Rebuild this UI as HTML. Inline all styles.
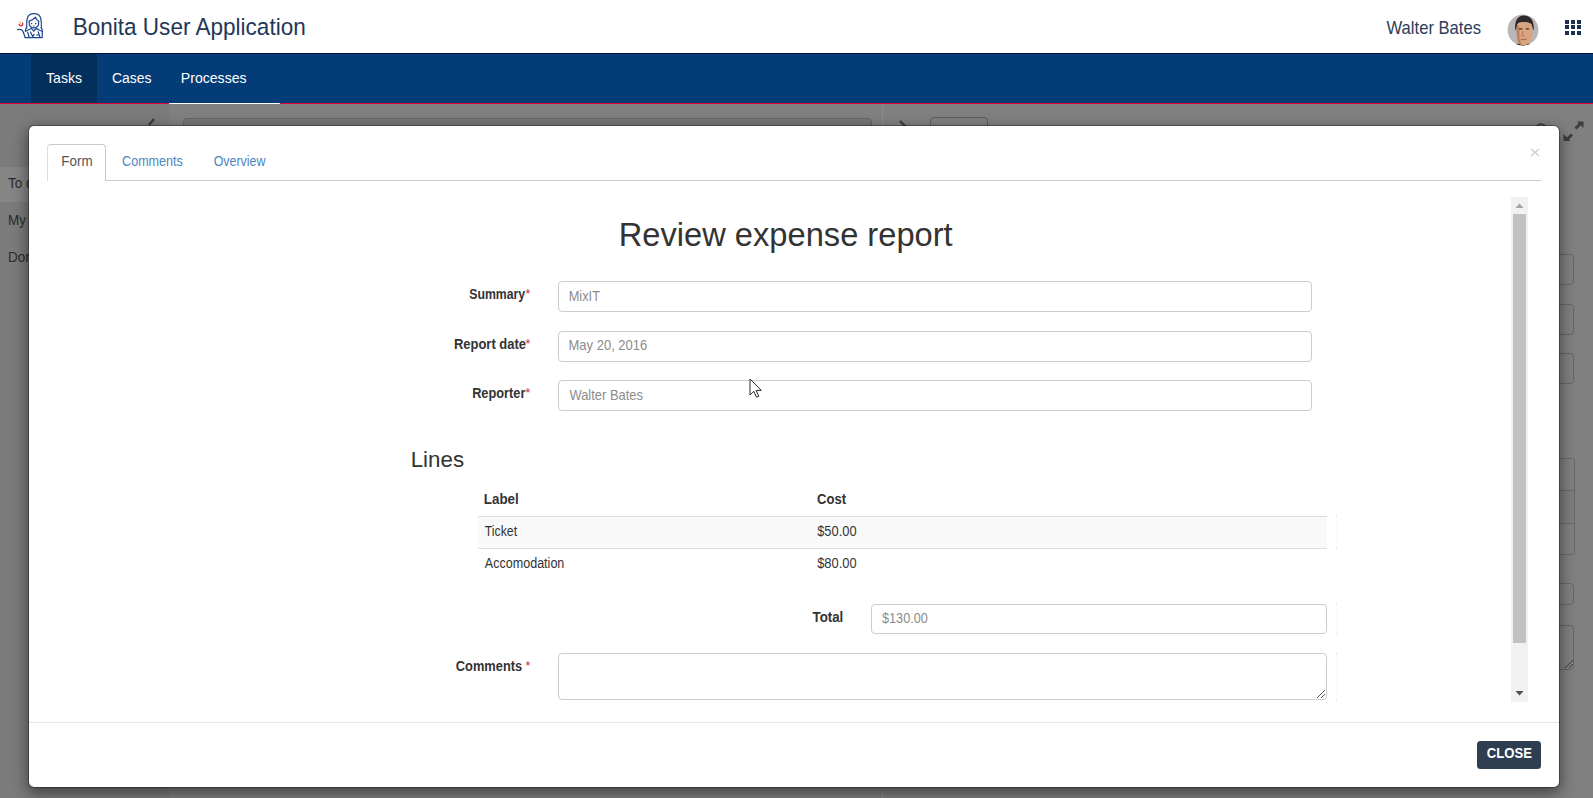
<!DOCTYPE html>
<html><head><meta charset="utf-8">
<style>
*{box-sizing:border-box}
html,body{margin:0;padding:0;width:1593px;height:798px;overflow:hidden;background:#fff;font-family:"Liberation Sans",sans-serif}
.a{position:absolute}
.t{position:absolute;white-space:pre;line-height:1;transform-origin:0 0}
.inp{position:absolute;border:1px solid #cccccc;border-radius:4px;background:#fff}
.bk{position:absolute;border:1px solid #676767;border-radius:4px}
.star{position:absolute;white-space:pre;line-height:1;color:#cf2a2a;font-weight:normal;transform-origin:0 0}
</style></head><body>
<!-- header -->
<svg class="a" style="left:14px;top:10px" width="32" height="32" viewBox="0 0 32 32">
  <g fill="none" stroke="#1b4690" stroke-width="1.2" stroke-linecap="round" stroke-linejoin="round">
    <path d="M12.8 18 C12.5 14 12.6 11 13.2 8.5 C14 5.3 16.5 3.6 20 3.6 C23.5 3.6 26 5.3 26.8 8.5 C27.4 11 27.5 14 27.3 18"/>
    <path d="M15.2 11.2 C16.8 10.8 19.8 9.5 21.4 7.2 C22 9.2 23 10.6 24.6 11.2"/>
    <path d="M15.2 11.2 L15.2 14.2 C15.6 16.6 17.6 17.8 19.8 17.8 C22.2 17.8 24.2 16.6 24.6 14.2 L24.6 11.2"/>
    <path d="M17.2 18.2 L19.8 21 L22.4 18.2"/>
    <path d="M12.6 17.6 C11.6 18.8 11.2 20 11.4 21.2 M27.3 17.6 C28.2 18.8 28.4 20 28.2 21.4"/>
    <path d="M11.4 21.2 C12.8 20.8 14.5 20.2 17.2 18.6 M28.2 21.4 C26.8 20.6 25 20 22.4 18.6"/>
    <path d="M3.6 19.6 C5.5 19 7.2 19.4 8.6 20.6 C9.4 22 10.2 24.5 11 27.2"/>
    <path d="M11 27.6 L28.2 27.6 L28.2 21.4"/>
    <path d="M13.6 22.2 L15.2 27.2 M16.4 22 L18.8 26.6 L20 24.4 M22.5 25 L25.2 25 M24.2 21.8 L25.8 26.8"/>
  </g>
  <circle cx="17.6" cy="13.6" r="0.8" fill="#1b4690"/><circle cx="21.8" cy="13.6" r="0.8" fill="#1b4690"/>
  <path d="M19 16 L20.6 16" stroke="#1b4690" stroke-width="0.9"/>
  <path d="M5.2 14.4 C5.6 16.4 8.4 16.6 8.8 14.2 M8.6 13.2 L8.6 13.4" fill="none" stroke="#e2142d" stroke-width="1.3" stroke-linecap="round"/>
  <path d="M6.4 11.2 C5.8 12.2 6 13.2 6.6 14" fill="none" stroke="#e8a060" stroke-width="0.9"/>
</svg>
<!-- avatar -->
<svg class="a" style="left:1505px;top:12px" width="36" height="36" viewBox="0 0 36 36">
  <defs><clipPath id="cp"><circle cx="18" cy="18" r="15.4"/></clipPath></defs>
  <circle cx="18" cy="18" r="15.4" fill="#bcb5b5"/>
  <g clip-path="url(#cp)">
    <path d="M10.2 17 C9.6 8 13 3.4 18.8 3.4 C24.5 3.4 28.6 7 28.8 15.5 L28.4 19 L26.6 12.5 C24 9.5 14.5 9 12.2 12.5 L11 19 Z" fill="#2e2b2b"/>
    <path d="M12.2 12.5 C14.5 9 24 9.5 26.6 12.5 C27.6 17 27.6 23.5 25.8 28 C24.3 31.2 21.4 33.2 18.6 33.2 C15.3 33.2 12.8 30.6 12.2 26.5 C11.5 21.5 11.5 16.5 12.2 12.5Z" fill="#d9a47e"/>
    <path d="M12.2 12.5 C11.5 16.5 11.5 21.5 12.2 26.5 C12.8 30.6 15.3 33.2 17 33.2 C15 30 14 25 14.5 20 C14.8 16 13.8 13.5 12.2 12.5Z" fill="#b9835f"/>
    <ellipse cx="15.6" cy="16.8" rx="2" ry="0.9" fill="#6f4632"/>
    <ellipse cx="22.4" cy="16.8" rx="2" ry="0.9" fill="#6f4632"/>
    <path d="M17.6 19 L17 24 L19.4 24.2" fill="none" stroke="#b07a58" stroke-width="1"/>
    <path d="M15.8 27.2 C17.5 27.8 19.8 27.8 21.6 27" fill="none" stroke="#9c6248" stroke-width="1"/>
    <path d="M8 36 C9 32 12 31 15 32 C16.5 33.5 20.5 33.5 22 32 C25 31 28 32 29 36 Z" fill="#3a3535"/>
    <path d="M15 31.5 C16.5 34 20.5 34 22 31.5 L22 33 C20 35 17 35 15 33Z" fill="#c8946e"/>
  </g>
</svg>
<!-- grid icon -->
<svg class="a" style="left:1565px;top:20px" width="16" height="16" viewBox="0 0 16 16" fill="#1e3050"><rect x="0" y="0" width="4" height="4"/><rect x="6" y="0" width="4" height="4"/><rect x="12" y="0" width="4" height="4"/><rect x="0" y="5" width="4" height="4"/><rect x="6" y="5" width="4" height="4"/><rect x="12" y="5" width="4" height="4"/><rect x="0" y="11" width="4" height="4"/><rect x="6" y="11" width="4" height="4"/><rect x="12" y="11" width="4" height="4"/></svg>
<!-- navbar -->
<div class="a" style="left:0;top:53px;width:1593px;height:1px;background:#001a3d"></div>
<div class="a" style="left:0;top:54px;width:1593px;height:49px;background:#033c77"></div>
<div class="a" style="left:31px;top:54px;width:66px;height:49px;background:#032f5d"></div>
<div class="a" style="left:0;top:103px;width:1593px;height:1px;background:#dc0336"></div>
<div class="a" style="left:169px;top:103px;width:111px;height:1px;background:#ffffff"></div>
<!-- backdrop (dimmed page) -->
<div class="a" style="left:0;top:104px;width:1593px;height:694px;background:#808080"></div>
<div class="a" style="left:0;top:104px;width:169px;height:694px;background:#7b7b7b"></div>
<div class="a" style="left:0;top:167px;width:169px;height:35px;background:#858585"></div>
<div class="t" style="left:8px;top:176px;font-size:13.5px;color:#2b2b2b;transform:scaleY(1.05)">To do</div>
<div class="t" style="left:8px;top:213px;font-size:13.5px;color:#2b2b2b;transform:scaleY(1.05)">My tasks</div>
<div class="t" style="left:8px;top:250px;font-size:13.5px;color:#2b2b2b;transform:scaleY(1.05)">Done</div>
<svg class="a" style="left:140px;top:114px" width="20" height="16"><path d="M14 5 L9 11" stroke="#3b3b3b" stroke-width="2.2"/></svg>
<div class="a" style="left:183px;top:118px;width:689px;height:40px;border:1px solid #656565;border-radius:4px;background:#777"></div>
<div class="a" style="left:882px;top:106px;width:1px;height:692px;background:#8d8d8d"></div>
<svg class="a" style="left:895px;top:116px" width="20" height="14"><path d="M5 5 L11 11" stroke="#3b3b3b" stroke-width="2.2"/></svg>
<div class="a" style="left:930px;top:117px;width:58px;height:30px;border:1px solid #5c5c5c;border-radius:4px"></div>
<svg class="a" style="left:1530px;top:118px" width="22" height="16"><circle cx="11" cy="11" r="5" fill="none" stroke="#3a3a3a" stroke-width="1.6"/></svg>
<svg class="a" style="left:1562px;top:120px" width="24" height="24">
  <path d="M13.5 8.5 L18.5 3.5" stroke="#3d3d3d" stroke-width="3"/><path d="M15 1.5 L21.5 1.5 L21.5 8 Z" fill="#3d3d3d"/>
  <path d="M10 14.5 L5 19.5" stroke="#3d3d3d" stroke-width="3"/><path d="M1.5 14 L1.5 21 L8.5 21 Z" fill="#3d3d3d"/>
</svg>
<div class="bk" style="left:1400px;top:254px;width:174px;height:31px"></div>
<div class="bk" style="left:1400px;top:304px;width:174px;height:31px"></div>
<div class="bk" style="left:1400px;top:353px;width:174px;height:31px"></div>
<div class="a" style="left:1400px;top:490px;width:175px;height:33px;background:#7d7d7d"></div>
<div class="a" style="left:1400px;top:458px;width:175px;height:97px;border:1px solid #6a6a6a;border-radius:2px"></div>
<div class="a" style="left:1400px;top:490px;width:175px;height:1px;background:#6a6a6a"></div>
<div class="a" style="left:1400px;top:523px;width:175px;height:1px;background:#6a6a6a"></div>
<div class="bk" style="left:1400px;top:583px;width:174px;height:22px"></div>
<div class="bk" style="left:1400px;top:625px;width:174px;height:45px"></div>
<svg class="a" style="left:1562px;top:657px" width="12" height="12"><path d="M3 11 L11 3 M7 11 L11 7" stroke="#3d3d3d" stroke-width="1"/></svg>
<!-- modal -->
<div class="a" style="left:28px;top:125px;width:1532px;height:663px;background:#fff;background-clip:padding-box;border:1px solid rgba(0,0,0,.3);border-radius:6px;box-shadow:0 5px 15px rgba(0,0,0,.5)"></div>
<!-- tabs -->
<div class="a" style="left:47px;top:180px;width:1494px;height:1px;background:#cbcbcb"></div>
<div class="a" style="left:47px;top:144px;width:59px;height:37px;background:#fff;border:1px solid #c9c9c9;border-left-color:#dcdcdc;border-bottom:none;border-radius:4px 4px 0 0"></div>
<svg class="a" style="left:1529px;top:147px" width="12" height="11"><path d="M2 2 L10 9 M10 2 L2 9" stroke="#cfcfcf" stroke-width="1.6"/></svg>
<!-- scrollbar -->
<div class="a" style="left:1511px;top:197px;width:17px;height:505px;background:#f1f1f1"></div>
<div class="a" style="left:1513px;top:214px;width:13px;height:429px;background:#c1c1c1"></div>
<svg class="a" style="left:1511px;top:197px" width="17" height="17"><path d="M4.5 11 L8.5 6.5 L12.5 11 Z" fill="#a3a3a3"/></svg>
<svg class="a" style="left:1511px;top:685px" width="17" height="17"><path d="M4.5 6 L8.5 10.5 L12.5 6 Z" fill="#505050"/></svg>
<!-- form -->
<div class="inp" style="left:558px;top:281px;width:754px;height:31px"></div>
<div class="inp" style="left:558px;top:331px;width:754px;height:31px"></div>
<div class="inp" style="left:558px;top:380px;width:754px;height:31px"></div>
<div class="a" style="left:478px;top:516px;width:849px;height:1px;background:#dddddd"></div>
<div class="a" style="left:478px;top:517px;width:849px;height:31px;background:#f9f9f9"></div>
<div class="a" style="left:478px;top:548px;width:849px;height:1px;background:#dddddd"></div>
<div class="a" style="left:1336px;top:516px;width:1px;height:33px;background:#fafafa"></div><div class="a" style="left:1336px;top:516px;width:1px;height:1px;background:#d8d8d8"></div><div class="a" style="left:1336px;top:548px;width:1px;height:1px;background:#d8d8d8"></div>
<div class="inp" style="left:871px;top:604px;width:456px;height:30px"></div>
<div class="a" style="left:1336px;top:604px;width:1px;height:30px;background:#fafafa"></div><div class="a" style="left:1336px;top:604px;width:1px;height:1px;background:#d8d8d8"></div><div class="a" style="left:1336px;top:633px;width:1px;height:1px;background:#d8d8d8"></div>
<div class="inp" style="left:558px;top:653px;width:769px;height:47px"></div>
<div class="a" style="left:1336px;top:653px;width:1px;height:47px;background:#fafafa"></div><div class="a" style="left:1336px;top:653px;width:1px;height:1px;background:#d8d8d8"></div><div class="a" style="left:1336px;top:699px;width:1px;height:1px;background:#d8d8d8"></div>
<svg class="a" style="left:1316px;top:689px" width="10" height="10"><path d="M1 9 L9 1 M5 9 L9 5" stroke="#555" stroke-width="1"/></svg>
<!-- footer -->
<div class="a" style="left:29px;top:722px;width:1530px;height:1px;background:#e5e5e5"></div>
<div class="a" style="left:1477px;top:741px;width:63.5px;height:28px;background:#2c3e50;border-radius:3.5px"></div>
<div class="t" id="t_title" style="left:72.65px;top:16.01px;font-size:22.55px;font-weight:400;color:#233756;transform:scaleY(1.054)">Bonita User Application</div>
<div class="t" id="t_user" style="left:1386.58px;top:20.18px;font-size:16.60px;font-weight:400;color:#2b3d5b;transform:scaleY(1.096)">Walter Bates</div>
<div class="t" id="t_tasks" style="left:46.05px;top:69.62px;font-size:14.12px;font-weight:400;color:#ffffff;transform:scaleY(1.090)">Tasks</div>
<div class="t" id="t_cases" style="left:111.92px;top:70.62px;font-size:13.93px;font-weight:400;color:#ffffff;transform:scaleY(1.105)">Cases</div>
<div class="t" id="t_proc" style="left:180.77px;top:69.62px;font-size:14.11px;font-weight:400;color:#ffffff;transform:scaleY(1.090)">Processes</div>
<div class="t" id="t_form" style="left:61.28px;top:154.83px;font-size:13.42px;font-weight:400;color:#555555;transform:scaleY(1.042)">Form</div>
<div class="t" id="t_comm" style="left:122.07px;top:154.83px;font-size:12.59px;font-weight:400;color:#4b85c0;transform:scaleY(1.111)">Comments</div>
<div class="t" id="t_over" style="left:213.65px;top:154.83px;font-size:12.45px;font-weight:400;color:#4b85c0;transform:scaleY(1.123)">Overview</div>
<div class="t" id="t_h1" style="left:618.69px;top:217.84px;font-size:32.66px;font-weight:400;color:#333333;transform:scaleY(1.019)">Review expense report</div>
<div class="t" id="t_sum" style="left:469.21px;top:287.83px;font-size:12.28px;font-weight:700;color:#333333;transform:scaleY(1.139)">Summary</div>
<div class="t" id="t_rdate" style="left:453.92px;top:337.83px;font-size:12.97px;font-weight:700;color:#333333;transform:scaleY(1.078)">Report date</div>
<div class="t" id="t_rep" style="left:472.15px;top:386.83px;font-size:12.79px;font-weight:700;color:#333333;transform:scaleY(1.093)">Reporter</div>
<div class="t" id="t_v1" style="left:568.67px;top:289.83px;font-size:12.82px;font-weight:400;color:#8c8c8c;transform:scaleY(1.091)">MixIT</div>
<div class="t" id="t_v2" style="left:568.53px;top:337.83px;font-size:13.00px;font-weight:400;color:#8c8c8c;transform:scaleY(1.076)">May 20, 2016</div>
<div class="t" id="t_v3" style="left:569.44px;top:388.83px;font-size:12.93px;font-weight:400;color:#8c8c8c;transform:scaleY(1.082)">Walter Bates</div>
<div class="t" id="t_lines" style="left:410.69px;top:448.53px;font-size:22.33px;font-weight:400;color:#333333;transform:scaleY(1.002)">Lines</div>
<div class="t" id="t_label" style="left:483.78px;top:492.83px;font-size:13.40px;font-weight:700;color:#333333;transform:scaleY(1.044)">Label</div>
<div class="t" id="t_cost" style="left:817.08px;top:491.83px;font-size:13.00px;font-weight:700;color:#333333;transform:scaleY(1.076)">Cost</div>
<div class="t" id="t_tick" style="left:484.75px;top:524.83px;font-size:12.31px;font-weight:400;color:#333333;transform:scaleY(1.136)">Ticket</div>
<div class="t" id="t_50" style="left:817.17px;top:524.83px;font-size:12.89px;font-weight:400;color:#333333;transform:scaleY(1.085)">$50.00</div>
<div class="t" id="t_acc" style="left:484.83px;top:556.83px;font-size:12.55px;font-weight:400;color:#333333;transform:scaleY(1.114)">Accomodation</div>
<div class="t" id="t_80" style="left:817.17px;top:556.83px;font-size:12.89px;font-weight:400;color:#333333;transform:scaleY(1.085)">$80.00</div>
<div class="t" id="t_total" style="left:812.50px;top:609.83px;font-size:13.32px;font-weight:700;color:#333333;transform:scaleY(1.050)">Total</div>
<div class="t" id="t_130" style="left:882.05px;top:611.83px;font-size:12.67px;font-weight:400;color:#8c8c8c;transform:scaleY(1.104)">$130.00</div>
<div class="t" id="t_comm2" style="left:455.86px;top:659.83px;font-size:12.83px;font-weight:700;color:#333333;transform:scaleY(1.090)">Comments</div>
<div class="t" id="t_close" style="left:1486.83px;top:745.83px;font-size:13.12px;font-weight:700;color:#ffffff;transform:scaleY(1.066)">CLOSE</div>
<svg class="a" style="left:748.9px;top:378.2px" width="14" height="21"><path d="M1 1 L1 17 L4.8 13.3 L7.5 19.3 L9.8 18.3 L7.2 12.4 L12.3 12.4 Z" fill="#fff" stroke="#2a2a2a" stroke-width="1" stroke-linejoin="miter"/></svg>
<div class="star" style="left:525.6px;top:287.6px;font-size:12.5px">*</div>
<div class="star" style="left:525.6px;top:337.9px;font-size:12.5px">*</div>
<div class="star" style="left:525.6px;top:387.1px;font-size:12.5px">*</div>
<div class="star" style="left:525.6px;top:659.7px;font-size:12.5px">*</div>
</body></html>
